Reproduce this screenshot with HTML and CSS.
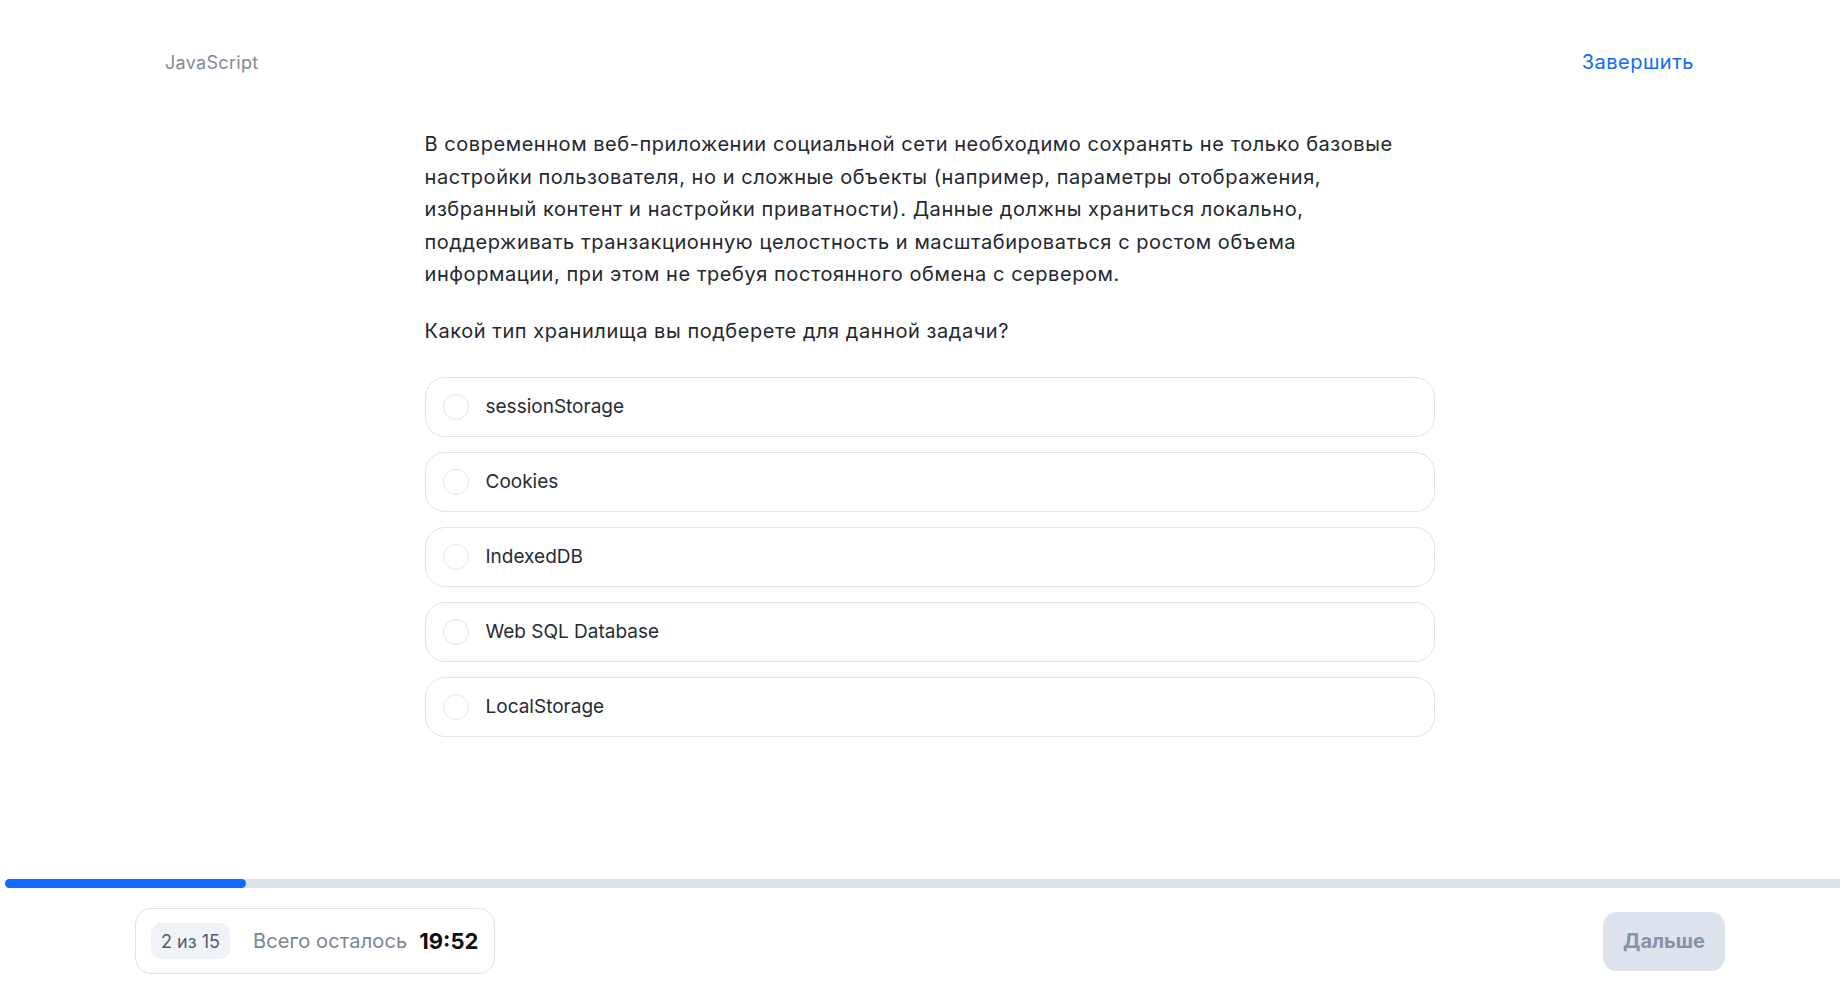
FILE: index.html
```html
<!DOCTYPE html>
<html lang="ru">
<head>
<meta charset="utf-8">
<title>JavaScript — тест</title>
<link rel="stylesheet" href="styles.css">
</head>
<body>
<div class="app">
  <header class="header">
    <span class="topic">JavaScript</span>
    <a class="finish" href="#">Завершить</a>
  </header>
  <main class="main">
    <div class="question">
      <p class="text">В современном веб-приложении социальной сети необходимо сохранять не только базовые настройки пользователя, но и сложные объекты (например, параметры отображения, избранный контент и настройки приватности). Данные должны храниться локально, поддерживать транзакционную целостность и масштабироваться с ростом объема информации, при этом не требуя постоянного обмена с сервером.</p>
      <p class="ask">Какой тип хранилища вы подберете для данной задачи?</p>
      <div class="options">
        <label class="option"><span class="radio"></span><span class="label">sessionStorage</span></label>
        <label class="option"><span class="radio"></span><span class="label">Cookies</span></label>
        <label class="option"><span class="radio"></span><span class="label">IndexedDB</span></label>
        <label class="option"><span class="radio"></span><span class="label">Web SQL Database</span></label>
        <label class="option"><span class="radio"></span><span class="label">LocalStorage</span></label>
      </div>
    </div>
  </main>
  <div class="progress"><div class="progress-fill" style="width: 241px"></div></div>
  <footer class="footer">
    <div class="status">
      <span class="counter">2 из 15</span>
      <span class="remain">Всего осталось</span>
      <span class="time">19:52</span>
    </div>
    <button class="next" type="button">Дальше</button>
  </footer>
</div>
</body>
</html>
```
FILE: styles.css
```css
* { box-sizing: border-box; }
html, body { margin: 0; padding: 0; }
body {
  font-family: Inter, "Liberation Sans", Arial, sans-serif;
  color: #272b33;
  background: #fff;
  overflow: hidden;
}
.app {
  height: 995px;
  display: flex;
  flex-direction: column;
}
.header {
  height: 124px;
  display: flex;
  align-items: center;
  justify-content: space-between;
  padding: 0 146px 0 165px;
}
.topic {
  font-size: 18px;
  letter-spacing: 0.3px;
  color: #7e8a9b;
}
.finish {
  font-size: 20px;
  letter-spacing: 0.5px;
  color: #0b6cff;
  text-decoration: none;
}
.main {
  flex: 1;
  padding-left: 19px;
}
.question {
  width: 1010px;
  margin: 0 auto;
}
.text {
  margin: 4px 0 0;
  font-size: 20px;
  letter-spacing: 0.55px;
  line-height: 32.5px;
  padding-right: 30px;
  color: #24282f;
}
.ask {
  margin: 24px 0 0;
  font-size: 20px;
  letter-spacing: 0.55px;
  line-height: 32px;
  color: #24282f;
}
.options {
  margin-top: 30px;
  display: flex;
  flex-direction: column;
  gap: 15px;
}
.option {
  height: 60px;
  border: 1px solid #dfe4ec;
  border-radius: 20px;
  display: flex;
  align-items: center;
  padding-left: 17px;
  gap: 17px;
}
.radio {
  width: 26px;
  height: 26px;
  border-radius: 50%;
  border: 1.5px solid #e1e6ee;
  flex: none;
}
.label {
  font-size: 19px;
  color: #262b34;
}
.progress {
  margin: 0 0 0 5px;
  height: 9px;
  background: #dde3eb;
  border-radius: 5px 0 0 5px;
}
.progress-fill {
  height: 100%;
  background: #0b6cff;
  border-radius: 5px;
}
.footer {
  display: flex;
  align-items: center;
  justify-content: space-between;
  padding: 20px 115px 21px 135px;
}
.status {
  height: 66px;
  border: 1px solid #dfe4ec;
  border-radius: 16px;
  display: flex;
  align-items: center;
  padding: 0 16px 0 15px;
}
.counter {
  width: 79px;
  height: 36px;
  display: flex;
  align-items: center;
  justify-content: center;
  background: #eff3f8;
  border-radius: 10px;
  font-size: 18px;
  color: #535c69;
}
.remain {
  margin-left: 23px;
  font-size: 20px;
  letter-spacing: 0.15px;
  color: #7a8595;
}
.time {
  margin-left: 12px;
  font-size: 22px;
  font-weight: 700;
  color: #0d0f12;
}
.next {
  width: 122px;
  height: 59px;
  border: none;
  border-radius: 14px;
  background: #dce3ec;
  color: #8593a5;
  font-family: inherit;
  font-size: 20px;
  font-weight: 700;
}
```
